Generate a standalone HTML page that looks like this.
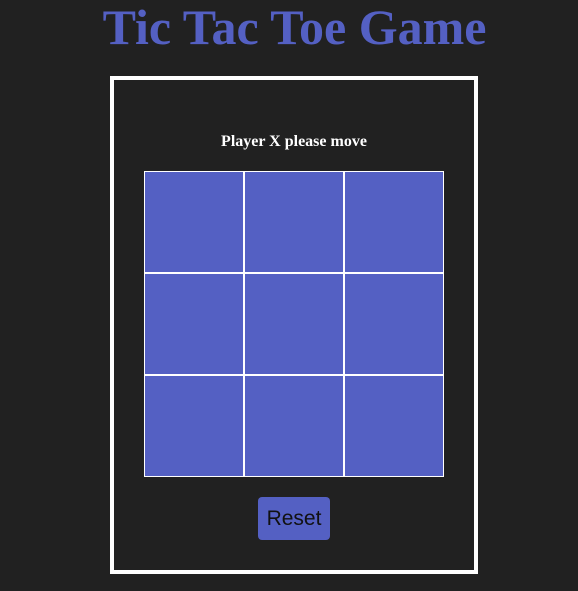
<!DOCTYPE html>
<html><head><style>
html,body{margin:0;padding:0;background:#212121;width:578px;height:591px;overflow:hidden}
h1{position:absolute;left:0;width:589px;top:-1px;margin:0;text-align:center;font:bold 50px "Liberation Serif",serif;color:#5460c3;line-height:56px}
.box{position:absolute;left:110px;top:76px;width:360px;height:490px;border:4px solid #fff}
.msg{position:absolute;left:0;width:360px;top:53px;text-align:center;font:bold 16px "Liberation Serif",serif;color:#fff}
.grid{position:absolute;left:30px;top:91px;width:298px;height:304px;background:#fff;border:1px solid #fff;display:grid;grid-template-columns:98px 98px 98px;grid-template-rows:100px 100px 100px;gap:2px}
.grid div{background:#5460c3}
.btn{position:absolute;left:144px;top:417px;width:72px;height:43px;border-radius:4px;background:#5460c3;color:#111;font:21px "Liberation Sans",sans-serif;text-align:center;line-height:43px}
</style></head><body>
<h1>Tic Tac Toe Game</h1>
<div class="box">
<div class="msg">Player X please move</div>
<div class="grid"><div></div><div></div><div></div><div></div><div></div><div></div><div></div><div></div><div></div></div>
<div class="btn">Reset</div>
</div>
</body></html>
